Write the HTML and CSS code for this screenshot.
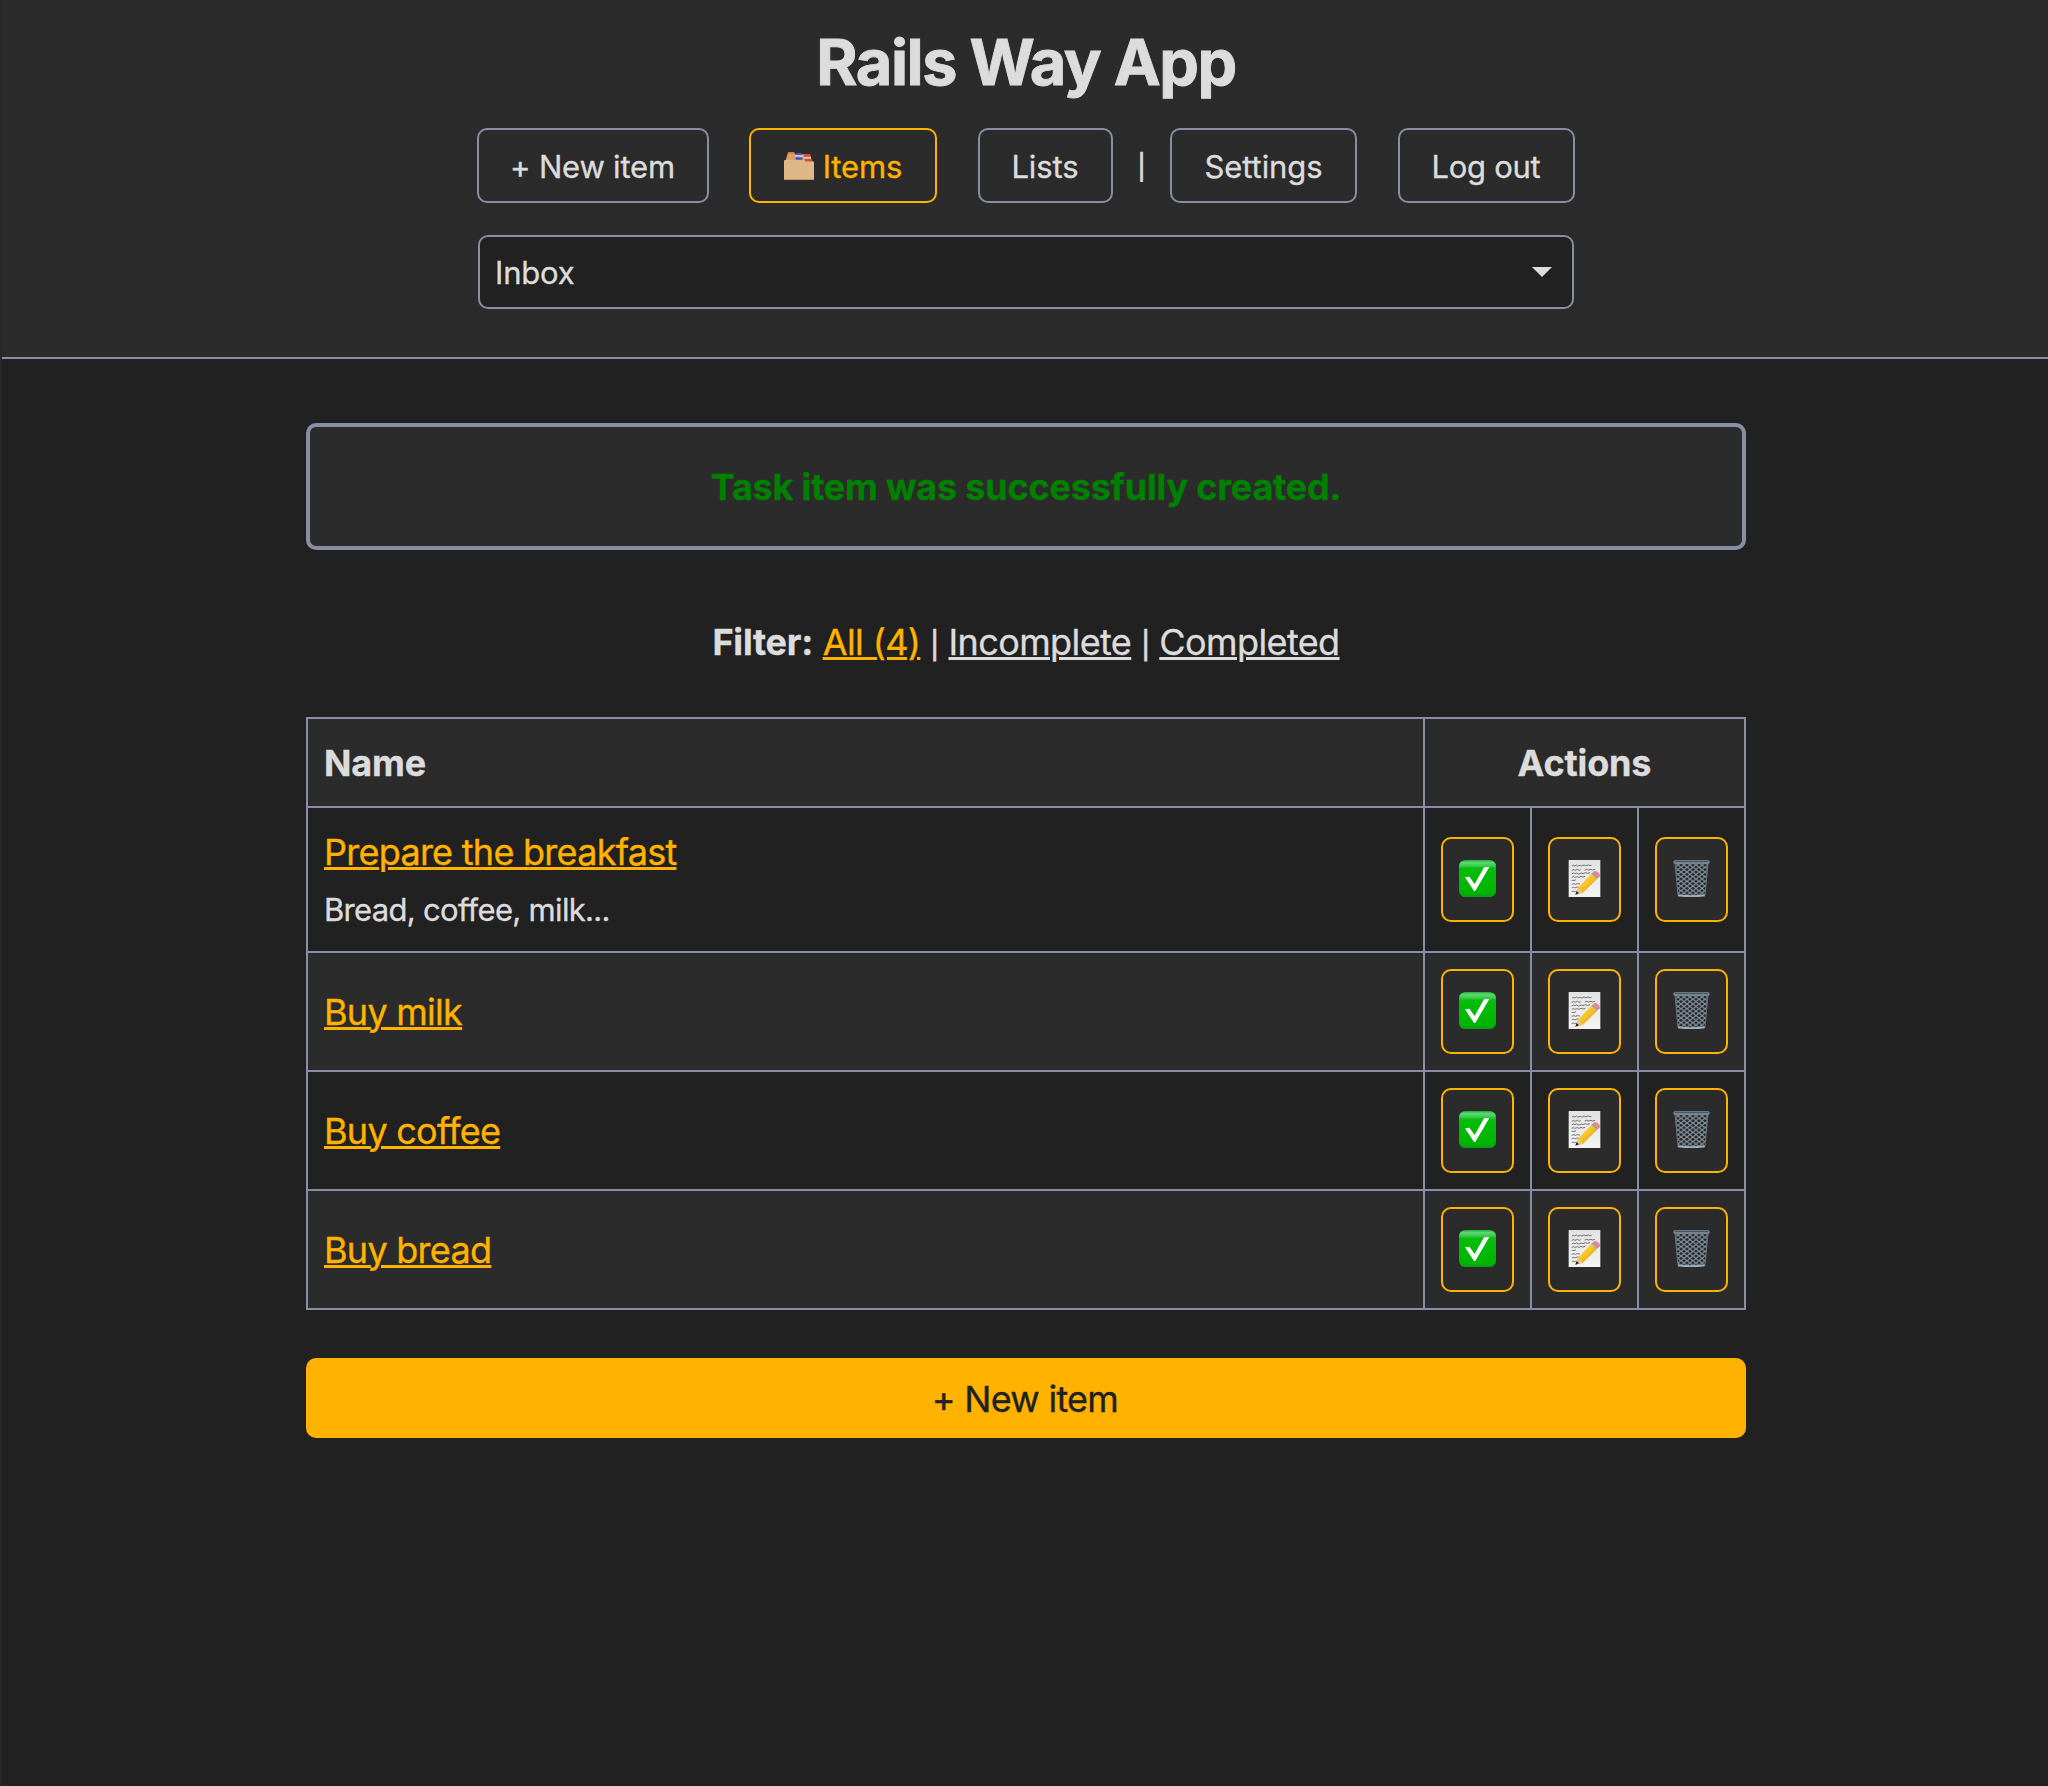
FILE: index.html
```html
<!DOCTYPE html>
<html lang="en">
<head>
<meta charset="utf-8">
<title>Rails Way App</title>
<link rel="stylesheet" href="styles.css">
</head>
<body>
<svg class="sprite" aria-hidden="true">
  <defs>
    <linearGradient id="green" x1="0" y1="0" x2="0" y2="1">
      <stop offset="0" stop-color="#1fae35"/><stop offset=".07" stop-color="#5fd873"/><stop offset=".17" stop-color="#35c94a"/><stop offset=".22" stop-color="#06bd0c"/><stop offset=".9" stop-color="#00b400"/><stop offset="1" stop-color="#0a9a1c"/>
    </linearGradient>
    <linearGradient id="paper" x1="0" y1="0" x2="0" y2="1">
      <stop offset="0" stop-color="#e2e2e2"/><stop offset="1" stop-color="#f4f4f4"/>
    </linearGradient>
    <linearGradient id="wood" x1="0" y1="0" x2="1" y2="1">
      <stop offset="0" stop-color="#ffe36a"/><stop offset=".5" stop-color="#f7c325"/><stop offset="1" stop-color="#cf8a10"/>
    </linearGradient>
    <pattern id="mesh" x="6" y="8" width="18" height="14" patternUnits="userSpaceOnUse">
      <path d="M0 0L18 14M18 0L0 14" stroke="#88929b" stroke-width="3.6"/>
    </pattern>
    <symbol id="check" viewBox="0 0 111 111">
      <rect width="111" height="111" rx="19" fill="url(#green)"/>
      <path d="M18 52l13-2 16 22L75 22l16-1-42 72h-4z" fill="#fff"/>
    </symbol>
    <symbol id="memo" viewBox="0 0 111 111">
      <path d="M8 0h95v111H8z" fill="url(#paper)"/>
      <path d="M18 18l5-2 3 2 5-3 4 3 8-2 4 2 7-3 5 2 9-2 4 2 5-1M17 31l6-2 4 2 8-3 4 3 5-2M56 30l6-2 5 2 8-2 4 2 8-2M17 42l5-3 4 2 6-2 6 3 8-3 5 2 7-3 6 2 8-2M17 52l5-2 4 2 8-2 5 2 6-3 5 2 8-2M17 61h10l3-2M17 73l7-2 4 2 6-2 8 1M17 84l6-3 3 3 8-3 6 1M17 95l4-2 4 2 7-2" fill="none" stroke="#555" stroke-width="2.4"/>
      <path d="M31 108L42 98 91 57 101 44z" fill="#777" opacity=".3"/>
      <path d="M28 104L36 83 76 41 93 57 51 98z" fill="url(#wood)"/>
      <path d="M28 104l8-21 6 4 2 5 7 6z" fill="#e7c68f"/>
      <path d="M28 104l4-11 7 7z" fill="#222"/>
      <path d="M76 41l6-5 16 15-5 6z" fill="#9da1a5"/>
      <path d="M82 36c6-10 26 7 18 15l-4 1z" fill="#f0828f"/>
    </symbol>
    <symbol id="trash" viewBox="0 0 111 111">
      <path d="M6 8h100l-11 101H15z" fill="#202428"/>
      <path d="M6 8h100l-11 101H15z" fill="url(#mesh)"/>
      <path d="M6 10l9 96M105 10l-9 96" stroke="#66727e" stroke-width="3"/>
      <path d="M15 106q40 5 80 0" fill="none" stroke="#9fb0c0" stroke-width="5"/>
      <rect x="1" y="1" width="109" height="10" rx="5" fill="#84929f"/>
      <path d="M5 5h101" stroke="#465664" stroke-width="4"/>
    </symbol>
    <symbol id="dividers" viewBox="0 0 90 84">
      <path d="M10 8l3-7h17l3 6h45l5 18H5z" fill="#cfa473"/>
      <path d="M13 1h17l2 5H11z" fill="#d98443"/>
      <path d="M12 11h20l1 6H10z" fill="#f09a45"/>
      <path d="M36 3h18v6H35zM35 16h20v7H35z" fill="#3d50d0"/>
      <path d="M60 7h19l2 7H60zM62 21h22l1 7H62z" fill="#e3413a"/>
      <path d="M34 10h22v4H34zM59 15h22v4H60z" fill="#e8ceb0"/>
      <path d="M0 27q0-3 3-3h57q3 0 3 4h24q3 0 3 3v52H0z" fill="#deb887"/>
      <path d="M0 81h90v3H0z" fill="#c49a68"/>
    </symbol>
  </defs>
</svg>

<div class="page">
  <header class="header">
    <h1 class="title">Rails Way App</h1>
    <nav class="nav">
      <a class="nav-link nav-new">+ New item</a>
      <a class="nav-link nav-items current"><svg class="nav-icon"><use href="#dividers"/></svg>Items</a>
      <a class="nav-link nav-lists">Lists</a>
      <span class="divider">|</span>
      <a class="nav-link nav-settings">Settings</a>
      <a class="nav-link nav-logout">Log out</a>
    </nav>
    <div class="select">Inbox<svg class="caret" viewBox="0 0 20 10"><path d="M0 0h20L10 10z"/></svg></div>
  </header>

  <main class="main">
    <p class="notice">Task item was successfully created.</p>
    <p class="filter"><strong>Filter:</strong> <a class="link active">All (4)</a> <span class="bar">|</span> <a class="link">Incomplete</a> <span class="bar">|</span> <a class="link">Completed</a></p>
    <table class="items">
      <thead>
        <tr><th class="name">Name</th><th class="actions" colspan="3">Actions</th></tr>
      </thead>
      <tbody>
        <tr class="tall">
          <td class="name"><a class="link active">Prepare the breakfast</a><div class="note">Bread, coffee, milk...</div></td>
          <td><a class="action"><svg><use href="#check"/></svg></a></td>
          <td><a class="action"><svg><use href="#memo"/></svg></a></td>
          <td><a class="action"><svg><use href="#trash"/></svg></a></td>
        </tr>
        <tr>
          <td class="name"><a class="link active">Buy milk</a></td>
          <td><a class="action"><svg><use href="#check"/></svg></a></td>
          <td><a class="action"><svg><use href="#memo"/></svg></a></td>
          <td><a class="action"><svg><use href="#trash"/></svg></a></td>
        </tr>
        <tr>
          <td class="name"><a class="link active">Buy coffee</a></td>
          <td><a class="action"><svg><use href="#check"/></svg></a></td>
          <td><a class="action"><svg><use href="#memo"/></svg></a></td>
          <td><a class="action"><svg><use href="#trash"/></svg></a></td>
        </tr>
        <tr>
          <td class="name"><a class="link active">Buy bread</a></td>
          <td><a class="action"><svg><use href="#check"/></svg></a></td>
          <td><a class="action"><svg><use href="#memo"/></svg></a></td>
          <td><a class="action"><svg><use href="#trash"/></svg></a></td>
        </tr>
      </tbody>
    </table>
    <a class="new-item">+ New item</a>
  </main>
</div>
</body>
</html>
```
FILE: styles.css
```css
* { box-sizing: border-box; }

body {
  margin: 0;
  background: #212121;
  color: #dcdcdc;
  font: 36px/54px Inter, "Liberation Sans", sans-serif;
  letter-spacing: -0.73px;
  -webkit-text-stroke: 0.35px currentColor;
}

.sprite { position: absolute; width: 0; height: 0; }

.page { min-height: 1786px; border-left: 2px solid #27272a; }

.header {
  display: flex;
  flex-direction: column;
  align-items: center;
  height: 359px;
  padding: 24px 0 0 2px;
  background: #2b2b2b;
  border-bottom: 2px solid #898ea4;
}

.title {
  margin: 0;
  font-size: 63px;
  line-height: 76px;
  font-weight: 700;
  letter-spacing: -1.45px;
  -webkit-text-stroke-width: 0.9px;
}

.nav {
  display: flex;
  width: 1098px;
  height: 75px;
  margin-top: 28px;
  font-size: 31px;
  letter-spacing: -0.1px;
}

.nav-link {
  display: flex;
  align-items: center;
  justify-content: center;
  padding-top: 2px;
  border: 2px solid #898ea4;
  border-radius: 10px;
}

.nav-new { width: 232px; padding-right: 1px; letter-spacing: -0.2px; }
.nav-items { width: 188px; margin-left: 40px; }
.nav-lists { width: 135px; margin-left: 41px; padding-right: 1px; }
.nav-settings { width: 187px; }
.nav-logout { width: 177px; margin-left: 41px; padding-right: 1px; letter-spacing: -0.3px; }
.divider { width: 57px; text-align: center; font-size: 25px; font-weight: 500; line-height: 79px; }
.current { border-color: #ffb300; color: #ffb300; }
.nav-icon { width: 30px; height: 28px; margin: 0 9px 2px 0; }

.select {
  display: flex;
  align-items: center;
  justify-content: space-between;
  width: 1096px;
  height: 74px;
  margin-top: 32px;
  padding: 2px 20px 0 15px;
  background: #212121;
  border: 2px solid #898ea4;
  border-radius: 10px;
  font-size: 31px;
  letter-spacing: -0.2px;
}

.caret { width: 20px; height: 10px; margin-bottom: 2px; fill: #dcdcdc; }

.main { width: 1440px; margin-left: 304px; padding-top: 64px; }

.notice {
  display: flex;
  align-items: center;
  justify-content: center;
  height: 127px;
  margin: 0;
  background: #2b2b2b;
  border: 4px solid #898ea4;
  border-radius: 10px;
  color: #008000;
  font-weight: 700;
  letter-spacing: -0.2px;
}

.filter { margin: 65px 0 0; height: 102px; text-align: center; letter-spacing: -0.6px; }
.filter strong { letter-spacing: -0.2px; }

.bar {
  display: inline-block;
  width: 9px;
  text-align: center;
  font-size: 27px;
  font-weight: 500;
}

.link {
  text-decoration: underline;
  text-decoration-thickness: 3px;
  text-underline-offset: 2px;
}

.active { color: #ffb300; }

.items {
  width: 1440px;
  border-collapse: collapse;
  table-layout: fixed;
}

.items th, .items td {
  height: 119px;
  padding: 0 16px;
  border: 2px solid #898ea4;
}

.items th {
  height: 89px;
  background: #2b2b2b;
  font-weight: 700;
  letter-spacing: -0.15px;
}

.items .name { width: 1117px; text-align: left; }
.items .tall td { height: 145px; }
.items tbody tr:nth-child(even) { background: #2b2b2b; }

.note { font-size: 31px; line-height: 48px; margin-top: 7px; letter-spacing: -0.68px; }

.action {
  display: flex;
  align-items: center;
  justify-content: center;
  width: 73px;
  height: 85px;
  padding-bottom: 2px;
  background: #2b2b2b;
  border: 2px solid #ffb300;
  border-radius: 10px;
}

.action svg { width: 37px; height: 37px; }

.new-item {
  display: flex;
  align-items: center;
  justify-content: center;
  height: 80px;
  margin-top: 48px;
  padding: 2px 2px 0 0;
  background: #ffb300;
  border-radius: 10px;
  color: #212121;
}
```
